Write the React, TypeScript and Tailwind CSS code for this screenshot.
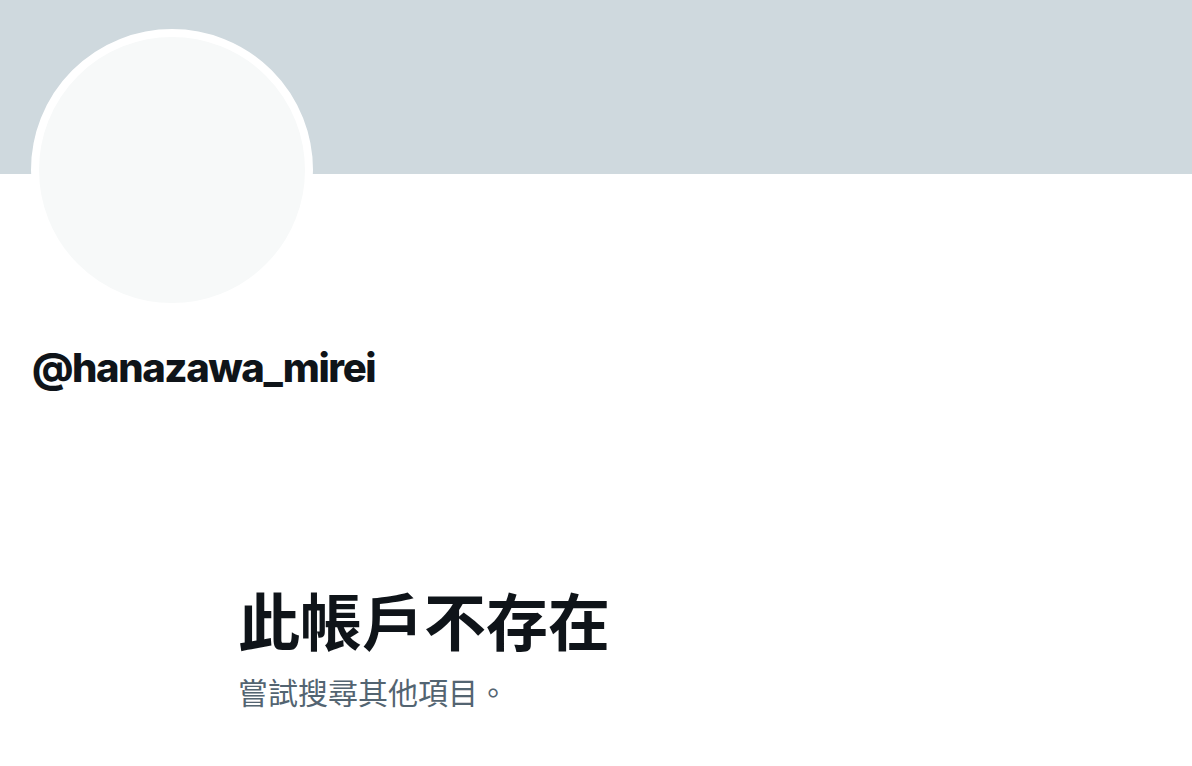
export default function App() {
  return (
    <div className="min-h-[766px] w-full bg-white" style={{ fontFamily: '"Inter", "Noto Sans CJK TC", sans-serif' }}>
      <div className="h-[174px] w-full bg-[#cfd9de]" />
      <div className="pl-[31px]">
        <div className="-mt-[145px] h-[282px] w-[282px] rounded-full border-[8px] border-white bg-[#f7f9f9]" />
      </div>
      <div className="mt-[33px] pl-[32px] text-[40px] font-extrabold leading-[48px] tracking-[-1.4px] text-[#0f1419]">
        @hanazawa_mirei
      </div>
      <div className="mt-[191px] pl-[238px]" style={{ fontFamily: '"Noto Sans CJK TC", sans-serif' }}>
        <h1 className="text-[62px] font-bold leading-[72px] text-[#0f1419]">此帳戶不存在</h1>
        <p className="mt-[18px] text-[30px] leading-[36px] text-[#536471]">嘗試搜尋其他項目。</p>
      </div>
    </div>
  );
}
